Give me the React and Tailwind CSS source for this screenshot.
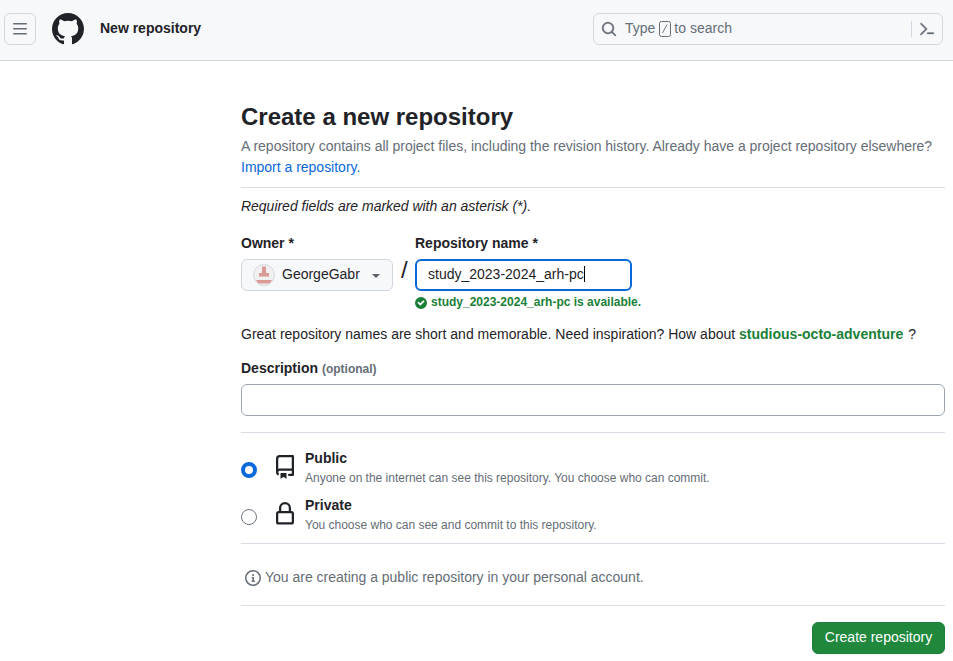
const paths = {
  bars: 'M1 2.75A.75.75 0 0 1 1.75 2h12.5a.75.75 0 0 1 0 1.5H1.75A.75.75 0 0 1 1 2.75Zm0 5A.75.75 0 0 1 1.75 7h12.5a.75.75 0 0 1 0 1.5H1.75A.75.75 0 0 1 1 7.75ZM1.75 12h12.5a.75.75 0 0 1 0 1.5H1.75a.75.75 0 0 1 0-1.5Z',
  github: 'M8 0C3.58 0 0 3.58 0 8c0 3.54 2.29 6.53 5.47 7.59.4.07.55-.17.55-.38 0-.19-.01-.82-.01-1.49-2.01.37-2.53-.49-2.69-.94-.09-.23-.48-.94-.82-1.13-.28-.15-.68-.52-.01-.53.63-.01 1.08.58 1.23.82.72 1.21 1.87.87 2.33.66.07-.52.28-.87.51-1.07-1.78-.2-3.64-.89-3.64-3.95 0-.87.31-1.59.82-2.15-.08-.2-.36-1.02.08-2.12 0 0 .67-.21 2.2.82.64-.18 1.32-.27 2-.27.68 0 1.36.09 2 .27 1.53-1.04 2.2-.82 2.2-.82.44 1.1.16 1.92.08 2.12.51.56.82 1.27.82 2.15 0 3.07-1.87 3.75-3.65 3.95.29.25.54.73.54 1.48 0 1.07-.01 1.93-.01 2.2 0 .21.15.46.55.38A8.013 8.013 0 0 0 16 8c0-4.42-3.58-8-8-8z',
  search: 'M10.68 11.74a6 6 0 0 1-7.922-8.982 6 6 0 0 1 8.982 7.922l3.04 3.04a.749.749 0 0 1-.326 1.275.749.749 0 0 1-.734-.215ZM11.5 7a4.499 4.499 0 1 0-8.997 0A4.499 4.499 0 0 0 11.5 7Z',
  palette: 'm6.354 8.04-4.773 4.773a.75.75 0 1 0 1.061 1.06L7.945 8.57a.75.75 0 0 0 0-1.06L2.642 2.206a.75.75 0 0 0-1.06 1.061L6.353 8.04ZM8.75 11.5a.75.75 0 0 0 0 1.5h5.5a.75.75 0 0 0 0-1.5h-5.5Z',
  check: 'M6 0a6 6 0 1 1 0 12A6 6 0 0 1 6 0Zm-.705 8.737L9.63 4.403 8.392 3.166 5.295 6.263l-1.7-1.702L2.356 5.8l2.938 2.938Z',
  info: 'M0 8a8 8 0 1 1 16 0A8 8 0 0 1 0 8Zm8-6.5a6.5 6.5 0 1 0 0 13 6.5 6.5 0 0 0 0-13ZM6.5 7.75A.75.75 0 0 1 7.25 7h1a.75.75 0 0 1 .75.75v2.75h.25a.75.75 0 0 1 0 1.5h-2a.75.75 0 0 1 0-1.5h.25v-2h-.25a.75.75 0 0 1-.75-.75ZM8 6a1 1 0 1 1 0-2 1 1 0 0 1 0 2Z',
  repo: 'M2 2.5A2.5 2.5 0 0 1 4.5 0h8.75a.75.75 0 0 1 .75.75v12.5a.75.75 0 0 1-.75.75h-2.5a.75.75 0 0 1 0-1.5h1.75v-2h-8a1 1 0 0 0-.714 1.7.75.75 0 1 1-1.072 1.05A2.495 2.495 0 0 1 2 11.5Zm10.5-1h-8a1 1 0 0 0-1 1v6.708A2.486 2.486 0 0 1 4.5 9h8ZM5 12.25a.25.25 0 0 1 .25-.25h3.5a.25.25 0 0 1 .25.25v3.25a.25.25 0 0 1-.4.2l-1.45-1.087a.249.249 0 0 0-.3 0L5.4 15.7a.25.25 0 0 1-.4-.2Z',
  lock: 'M4 4a4 4 0 0 1 8 0v2h.25c.966 0 1.75.784 1.75 1.75v5.5A1.75 1.75 0 0 1 12.25 15h-8.5A1.75 1.75 0 0 1 2 13.25v-5.5C2 6.784 2.784 6 3.75 6H4Zm8.25 3.5h-8.5a.25.25 0 0 0-.25.25v5.5c0 .138.112.25.25.25h8.5a.25.25 0 0 0 .25-.25v-5.5a.25.25 0 0 0-.25-.25ZM10.5 6V4a2.5 2.5 0 1 0-5 0v2Z',
};

function Icon({ name, box = 16, className }) {
  return (
    <svg viewBox={`0 0 ${box} ${box}`} fill="currentColor" className={`shrink-0 ${className}`} aria-hidden="true">
      <path fillRule="evenodd" d={paths[name]} />
    </svg>
  );
}

function Header() {
  return (
    <header className="flex h-[61px] items-start border-b border-[#d0d7de] bg-[#f6f8fa] pt-[13px] pr-[10px] pl-1">
      <button className="flex size-8 items-center justify-center rounded-md border border-[#d0d7de] text-[#656d76]">
        <Icon name="bars" className="size-4" />
      </button>
      <Icon name="github" className="ml-4 size-8" />
      <span className="ml-4 leading-[30px] font-bold">New repository</span>
      <div className="ml-auto flex h-8 w-[350px] items-center rounded-md border border-[#d0d7de] pr-[7px] pl-[7px] text-[#656d76]">
        <Icon name="search" className="size-4 stroke-current stroke-[0.3]" />
        <span className="ml-2 flex items-center pb-0.5 leading-5">
          Type
          <svg viewBox="0 0 12 16" fill="none" stroke="currentColor" className="mt-0.5 mr-[3px] ml-1 h-4 w-3">
            <rect x="0.5" y="0.5" width="11" height="15" rx="2" />
            <path d="M3.5 12 8 3.5" strokeWidth="0.9" />
          </svg>
          to search
        </span>
        <span className="mr-[7px] ml-auto h-4 w-px bg-[#d0d7de]" />
        <Icon name="palette" className="size-4 stroke-current stroke-[0.3]" />
      </div>
    </header>
  );
}

function Choice({ checked, icon, title, text }) {
  return (
    <label className="flex h-[47px]">
      <span
        className={
          checked
            ? 'mt-[14px] size-4 rounded-full border-[4px] border-[#0969da] bg-white'
            : 'mt-[14px] size-4 rounded-full border border-[#6e7781] bg-white'
        }
      />
      <Icon name={icon} className="mt-[7px] ml-4 size-6" />
      <span className="ml-2 flex flex-col">
        <span className="leading-[21px] font-bold">{title}</span>
        <span className="text-xs leading-[18px] tracking-[-0.01px] text-[#656d76]">{text}</span>
      </span>
    </label>
  );
}

export default function App() {
  return (
    <div className="h-[661px] overflow-hidden bg-white font-['Liberation_Sans',Arial,sans-serif] text-sm leading-[21px] text-[#1f2328]">
      <Header />
      <main className="ml-[241px] flex w-[704px] flex-col pt-[38px]">
        <h1 className="text-2xl leading-9 font-bold">Create a new repository</h1>
        <p className="mt-px tracking-[-0.01px] text-[#656d76]">
          A repository contains all project files, including the revision history. Already have a project repository
          elsewhere?
          <br />
          <a className="text-[#0969da]">Import a repository.</a>
        </p>
        <hr className="mt-[9px] border-[#d8dee4]" />
        <p className="mt-2 tracking-[-0.02px] italic">Required fields are marked with an asterisk (*).</p>

        <div className="mt-4 flex">
          <div className="w-[152px]">
            <div className="font-bold">Owner *</div>
            <button className="mt-[5px] flex h-8 w-full items-center rounded-md border border-[#d0d7de] bg-[#f6f8fa] pr-3 pl-[11px]">
              <svg viewBox="0 0 22 22" className="size-[22px] shrink-0">
                <circle cx="11" cy="11" r="10.5" fill="#f0f0f0" stroke="#d5d9dd" />
                <path fill="#dc9a97" d="M9 2.5h4V9h3v3.5H6V9h3zM3 16h16a10 10 0 0 1-3 3.5H6A10 10 0 0 1 3 16z" />
              </svg>
              <span className="ml-[7px] pb-0.5">GeorgeGabr</span>
              <span className="mt-0.5 ml-auto border-x-4 border-t-4 border-x-transparent border-t-[#59616a]" />
            </button>
          </div>
          <span className="mt-[25px] w-[22px] pl-2 text-2xl leading-[24px]">/</span>
          <div>
            <div className="font-bold">Repository name *</div>
            <div className="mt-[5px] flex h-8 w-[217px] items-center rounded-md border-2 border-[#0969da] pb-0.5 pl-[11px]">
              study_2023-2024_arh-pc
              <span className="h-4 w-px bg-black" />
            </div>
            <div className="mt-0.5 flex items-center text-xs leading-[18px] font-bold text-[#1a7f37]">
              <Icon name="check" box={12} className="mt-0.5 mr-1 size-3" />
              study_2023-2024_arh-pc is available.
            </div>
          </div>
        </div>

        <p className="mt-[13px]">
          Great repository names are short and memorable. Need inspiration? How about{' '}
          <strong className="text-[#1a7f37]">studious-octo-adventure</strong>
          <span className="ml-[5px]">?</span>
        </p>

        <div className="mt-[13px] font-bold">
          Description <span className="text-xs text-[#656d76]">(optional)</span>
        </div>
        <div className="mt-[5px] h-8 rounded-md border border-[#9ea7b1]" />

        <hr className="mt-4 mb-[15px] border-[#d8dee4]" />
        <Choice
          checked
          icon="repo"
          title="Public"
          text="Anyone on the internet can see this repository. You choose who can commit."
        />
        <Choice icon="lock" title="Private" text="You choose who can see and commit to this repository." />
        <hr className="mt-px border-[#d8dee4]" />

        <div className="mt-[23px] flex pl-1 tracking-[-0.01px] text-[#656d76]">
          <Icon name="info" className="mt-[3px] mr-1 size-4" />
          You are creating a public repository in your personal account.
        </div>
        <hr className="mt-[17px] border-[#d8dee4]" />
        <button className="mt-4 h-8 w-[133px] self-end rounded-md border border-[#1f7f3a] bg-[#1f883d] pb-0.5 text-white">
          Create repository
        </button>
      </main>
    </div>
  );
}
